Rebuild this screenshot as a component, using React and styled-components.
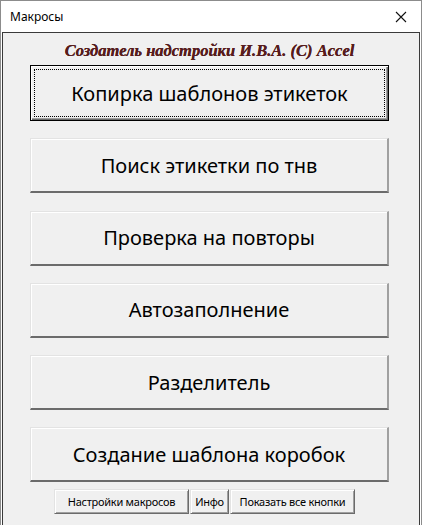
import React from "react";
import styled, { createGlobalStyle, css } from "styled-components";

const Global = createGlobalStyle`
  html, body { margin: 0; padding: 0; background: #ffffff; }
  * { box-sizing: border-box; }
`;

const Window = styled.div`
  width: 422px;
  height: 525px;
  border: 1px solid #8c8c8c;
  border-bottom: none;
  background: #ffffff;
  display: flex;
  flex-direction: column;
  overflow: hidden;
  font-family: "Noto Sans", "Open Sans", sans-serif;
`;

const TitleBar = styled.div`
  height: 31px;
  flex: none;
  display: flex;
  align-items: center;
  justify-content: space-between;
  padding: 0 8px 0 9px;
  background: #ffffff;
`;

const Title = styled.span`
  font-size: 12px;
  color: #000;
  line-height: 1;
`;

const Close = styled.div`
  width: 24px;
  height: 24px;
  display: flex;
  align-items: center;
  justify-content: center;
`;

const Body = styled.div`
  flex: 1;
  margin: 0 1px 0 1px;
  border: 1px solid #3a3a3a;
  border-bottom: none;
  background: #f0f0f0;
  display: flex;
  flex-direction: column;
  padding-left: 27px;
`;

const Header = styled.div`
  height: 32px;
  width: 359px;
  display: flex;
  align-items: center;
  justify-content: center;
  padding-top: 3px;
  font-family: "Liberation Serif", "DejaVu Serif", serif;
  font-style: italic;
  font-weight: bold;
  font-size: 16.5px;
  color: #5a1c1c;
  text-shadow: 0 0 0.6px #2a0a0a;
`;

const ButtonList = styled.div`
  display: flex;
  flex-direction: column;
  gap: 17.25px;
`;

const BigButton = styled.div`
  position: relative;
  width: 359px;
  height: 55px;
  display: flex;
  align-items: center;
  justify-content: center;
  font-size: 20px;
  color: #000;
  background: #f0f0f0;
  border-top: 1px solid #e3e3e3;
  border-left: 1px solid #e3e3e3;
  border-right: 2px solid #a0a0a0;
  border-bottom: 2px solid #6b6b6b;
  box-shadow: inset 1px 1px 0 #ffffff;
  ${(p) =>
    p.$focused &&
    css`
      height: 56px;
      border: 1px solid #000;
      box-shadow: inset 1px 1px 0 #ffffff, inset -1px -1px 0 #6b6b6b, inset -2px -2px 0 #a0a0a0;
      &::after {
        content: "";
        position: absolute;
        inset: 3px;
        border: 1px dotted #000;
      }
    `}
`;

const SmallRow = styled.div`
  display: flex;
  margin-top: 7px;
  margin-left: 24px;
  gap: 1px;
`;

const SmallButton = styled.div`
  width: ${(p) => p.$w}px;
  height: 25px;
  display: flex;
  align-items: center;
  justify-content: center;
  font-size: 11px;
  letter-spacing: -0.25px;
  color: #000;
  background: #f0f0f0;
  border-top: 1px solid #e3e3e3;
  border-left: 1px solid #e3e3e3;
  border-right: 1px solid #6b6b6b;
  border-bottom: 1px solid #6b6b6b;
  box-shadow: inset 1px 1px 0 #ffffff, inset -1px -1px 0 #a0a0a0;
`;

const labels = [
  "Копирка шаблонов этикеток",
  "Поиск этикетки по тнв",
  "Проверка на повторы",
  "Автозаполнение",
  "Разделитель",
  "Создание шаблона коробок",
];

export default function App() {
  return (
    <>
      <Global />
      <Window>
        <TitleBar>
          <Title>Макросы</Title>
          <Close>
            <svg width="12" height="12" viewBox="0 0 12 12">
              <path d="M1 1 L11 11 M11 1 L1 11" stroke="#111" strokeWidth="1.1" fill="none" />
            </svg>
          </Close>
        </TitleBar>
        <Body>
          <Header>Создатель надстройки И.В.А. (С) Accel</Header>
          <ButtonList>
            {labels.map((l, i) => (
              <BigButton key={l} $focused={i === 0}>
                {l}
              </BigButton>
            ))}
          </ButtonList>
          <SmallRow>
            <SmallButton $w={135}>Настройки макросов</SmallButton>
            <SmallButton $w={39}>Инфо</SmallButton>
            <SmallButton $w={125}>Показать все кнопки</SmallButton>
          </SmallRow>
        </Body>
      </Window>
    </>
  );
}
